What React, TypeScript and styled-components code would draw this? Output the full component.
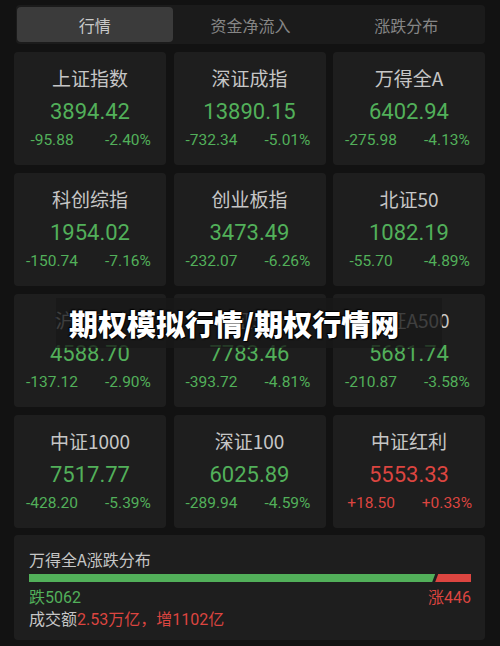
import React from "react";
import styled, { createGlobalStyle } from "styled-components";

const GlobalStyle = createGlobalStyle`
  html, body { margin: 0; padding: 0; background: #121212; }
  * { box-sizing: border-box; }
`;

const FONT = `Roboto, "Noto Sans CJK SC", sans-serif`;
const GREEN = "#52b05a";
const RED = "#dc4540";

const Page = styled.div`
  position: relative;
  width: 500px;
  min-height: 646px;
  background: #121212;
  padding: 5px 15px 6px 14px;
  font-family: ${FONT};
`;

const TabBar = styled.div`
  display: grid;
  grid-template-columns: repeat(3, 1fr);
  height: 39px;
  margin-left: 2px;
  padding: 2px 1px;
  background: #1b1b1b;
  border-radius: 4px;
`;

const Tab = styled.div<{ $active?: boolean }>`
  display: flex;
  align-items: center;
  justify-content: center;
  border-radius: 4px;
  font-size: 16px;
  background: ${(p) => (p.$active ? "#3b3b3b" : "transparent")};
  color: ${(p) => (p.$active ? "#c9c9c9" : "#868686")};
`;

const Grid = styled.div`
  display: grid;
  grid-template-columns: repeat(3, 1fr);
  grid-auto-rows: 113px;
  column-gap: 7.5px;
  row-gap: 8px;
  margin-top: 8px;
`;

const Card = styled.div`
  display: flex;
  flex-direction: column;
  align-items: center;
  background: #1e1e1e;
  border-radius: 4px;
  padding-top: 13px;
`;

const Title = styled.div`
  font-size: 19px;
  line-height: 26px;
  color: #c6c6c6;
  font-family: "Noto Sans CJK SC", Roboto, sans-serif;
`;

const Value = styled.div<{ $up?: boolean }>`
  margin-top: 6px;
  font-size: 22px;
  line-height: 30px;
  color: ${(p) => (p.$up ? RED : GREEN)};
`;

const Changes = styled.div<{ $up?: boolean }>`
  display: grid;
  grid-template-columns: 1fr 1fr;
  width: 100%;
  margin-top: 3px;
  font-size: 15.5px;
  line-height: 20px;
  color: ${(p) => (p.$up ? RED : GREEN)};
  text-align: center;
`;

const Summary = styled.div`
  margin-top: 7px;
  height: 105px;
  background: #1e1e1e;
  border-radius: 4px;
  padding: 13px 14px 0 15px;
  font-size: 16px;
  line-height: 22px;
`;

const SummaryTitle = styled.div`
  color: #c6c6c6;
  font-family: "Noto Sans CJK SC", Roboto, sans-serif;
`;

const Bar = styled.div`
  display: flex;
  gap: 2px;
  height: 8px;
  margin-top: 4px;
`;

const BarPart = styled.div<{ $up?: boolean }>`
  height: 100%;
  background: ${(p) => (p.$up ? RED : GREEN)};
  clip-path: ${(p) =>
    p.$up
      ? "polygon(3px 0, 100% 0, 100% 100%, 0 100%)"
      : "polygon(0 0, 100% 0, calc(100% - 3px) 100%, 0 100%)"};
  margin-left: ${(p) => (p.$up ? "-2px" : "0")};
`;

const CountRow = styled.div`
  display: flex;
  justify-content: space-between;
  margin-top: 5px;
`;

const Count = styled.span<{ $up?: boolean }>`
  color: ${(p) => (p.$up ? RED : GREEN)};
`;

const Turnover = styled.div`
  color: #c6c6c6;
`;

const Hot = styled.span`
  color: ${RED};
`;

const Overlay = styled.div`
  position: absolute;
  left: 56px;
  top: 298px;
  width: 386px;
  height: 50px;
  display: flex;
  align-items: center;
  padding-left: 13px;
  background: rgba(24, 24, 24, 0.78);
  color: #ffffff;
  font-family: "Noto Sans CJK SC", sans-serif;
  font-weight: 900;
  font-size: 29px;
  text-shadow: 0 0 2px #000, 1px 1px 1px #000, -1px -1px 1px #000;
`;

type Item = { name: string; value: string; chg: string; pct: string; up?: boolean };

const items: Item[] = [
  { name: "上证指数", value: "3894.42", chg: "-95.88", pct: "-2.40%" },
  { name: "深证成指", value: "13890.15", chg: "-732.34", pct: "-5.01%" },
  { name: "万得全A", value: "6402.94", chg: "-275.98", pct: "-4.13%" },
  { name: "科创综指", value: "1954.02", chg: "-150.74", pct: "-7.16%" },
  { name: "创业板指", value: "3473.49", chg: "-232.07", pct: "-6.26%" },
  { name: "北证50", value: "1082.19", chg: "-55.70", pct: "-4.89%" },
  { name: "沪深300", value: "4588.70", chg: "-137.12", pct: "-2.90%" },
  { name: "中证500", value: "7783.46", chg: "-393.72", pct: "-4.81%" },
  { name: "中证A500", value: "5681.74", chg: "-210.87", pct: "-3.58%" },
  { name: "中证1000", value: "7517.77", chg: "-428.20", pct: "-5.39%" },
  { name: "深证100", value: "6025.89", chg: "-289.94", pct: "-4.59%" },
  { name: "中证红利", value: "5553.33", chg: "+18.50", pct: "+0.33%", up: true },
];

const down = 5062;
const up = 446;

export default function App() {
  const downPct = (down / (down + up)) * 100;
  return (
    <>
      <GlobalStyle />
      <Page>
        <TabBar>
          <Tab $active>行情</Tab>
          <Tab>资金净流入</Tab>
          <Tab>涨跌分布</Tab>
        </TabBar>
        <Grid>
          {items.map((it) => (
            <Card key={it.name}>
              <Title>{it.name}</Title>
              <Value $up={it.up}>{it.value}</Value>
              <Changes $up={it.up}>
                <span>{it.chg}</span>
                <span>{it.pct}</span>
              </Changes>
            </Card>
          ))}
        </Grid>
        <Summary>
          <SummaryTitle>万得全A涨跌分布</SummaryTitle>
          <Bar>
            <BarPart style={{ width: `${downPct}%` }} />
            <BarPart $up style={{ flex: 1 }} />
          </Bar>
          <CountRow>
            <Count>跌5062</Count>
            <Count $up>涨446</Count>
          </CountRow>
          <Turnover>
            成交额<Hot>2.53万亿，增1102亿</Hot>
          </Turnover>
        </Summary>
        <Overlay>期权模拟行情/期权行情网</Overlay>
      </Page>
    </>
  );
}
